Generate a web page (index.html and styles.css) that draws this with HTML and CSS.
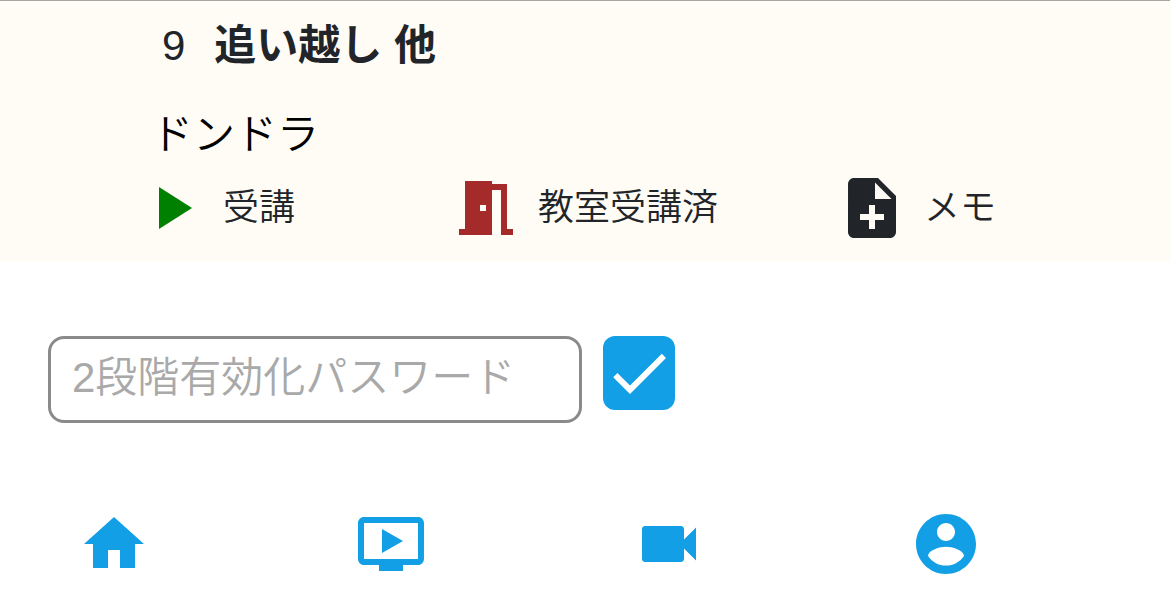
FILE: index.html
```html
<!DOCTYPE html>
<html lang="ja">
<head>
    <meta charset="UTF-8">
    <meta name="viewport" content="width=device-width, initial-scale=1.0">
    <title>追い越し 他</title>
    <link rel="stylesheet" href="styles.css">
</head>
<body>
    <main>
        <section class="lesson">
            <h2><span class="lesson-number">9</span>追い越し 他</h2>
            <p class="teacher">ドンドラ</p>
            <div class="actions">
                <button type="button" class="action">
                    <svg class="icon play" viewBox="0 0 24 24"><path d="M8 5v14l11-7z"/></svg>
                    <span>受講</span>
                </button>
                <button type="button" class="action">
                    <svg class="icon room" viewBox="0 0 24 24"><path d="M14 6v15H3v-2h2V3h9v1h5v15h2v2h-4V6h-3zm-4 5v2h2v-2h-2z"/></svg>
                    <span>教室受講済</span>
                </button>
                <button type="button" class="action">
                    <svg class="icon" viewBox="0 0 24 24"><path d="M14 2H6c-1.1 0-1.99.9-1.99 2L4 20c0 1.1.89 2 1.99 2H18c1.1 0 2-.9 2-2V8l-6-6zm2 14h-3v3h-2v-3H8v-2h3v-3h2v3h3v2zm-3-7V3.5L18.5 9H13z"/></svg>
                    <span>メモ</span>
                </button>
            </div>
        </section>

        <form class="password-form">
            <input type="text" class="password" placeholder="2段階有効化パスワード" aria-label="2段階有効化パスワード">
            <button type="button" class="submit" aria-label="送信">
                <svg class="icon" viewBox="0 0 24 24"><path d="M9 16.2L4.8 12l-1.4 1.4L9 19 21 7l-1.4-1.4L9 16.2z"/></svg>
            </button>
        </form>
    </main>

    <nav class="bottom-nav">
        <a href="#" aria-label="ホーム">
            <svg class="icon" viewBox="0 0 24 24"><path d="M10 20v-6h4v6h5v-8h3L12 3 2 12h3v8z"/></svg>
        </a>
        <a href="#" aria-label="動画">
            <svg class="icon" viewBox="0 0 24 24"><path d="M21 3H3c-1.11 0-2 .89-2 2v12c0 1.1.89 2 2 2h5v2h8v-2h5c1.1 0 1.99-.9 1.99-2L23 5c0-1.11-.9-2-2-2zm0 14H3V5h18v12zm-5-6l-7 4V7z"/></svg>
        </a>
        <a href="#" aria-label="カメラ">
            <svg class="icon" viewBox="0 0 24 24"><path d="M17 10.5V7c0-.55-.45-1-1-1H4c-.55 0-1 .45-1 1v10c0 .55.45 1 1 1h12c.55 0 1-.45 1-1v-3.5l4 4v-11l-4 4z"/></svg>
        </a>
        <a href="#" aria-label="アカウント">
            <svg class="icon" viewBox="0 0 24 24"><path d="M12 2C6.48 2 2 6.48 2 12s4.48 10 10 10 10-4.48 10-10S17.52 2 12 2zm0 3c1.66 0 3 1.34 3 3s-1.34 3-3 3-3-1.34-3-3 1.34-3 3-3zm0 14.2c-2.5 0-4.71-1.28-6-3.22.03-1.99 4-3.08 6-3.08 1.99 0 5.97 1.09 6 3.08-1.29 1.94-3.5 3.22-6 3.22z"/></svg>
        </a>
    </nav>
</body>
</html>
```
FILE: styles.css
```css
* {
    box-sizing: border-box;
}
body {
    margin: 0;
    background: #fff;
    color: #212529;
    font-family: "Liberation Sans", "Noto Sans CJK JP", sans-serif;
    font-weight: 350;
}
button,
input {
    font: inherit;
    color: inherit;
}
.icon {
    display: block;
    flex: none;
    width: 72px;
    height: 72px;
    fill: currentColor;
}

.lesson {
    padding: 15px 0 18px;
    border-top: 1px solid #aaa7a2;
    background: #fffcf5;
}
.lesson h2 {
    display: flex;
    align-items: center;
    gap: 29px;
    margin: 0;
    padding-left: 162px;
    font-size: 42px;
    line-height: 60px;
    font-weight: 700;
}
.lesson-number {
    font-weight: 400;
}
.teacher {
    margin: 29px 0 7px;
    padding-left: 151px;
    color: #000;
    font-size: 42px;
    line-height: 60px;
}
.actions {
    display: grid;
    grid-template-columns: 315fr 386fr 334fr;
    padding-left: 135px;
}
.action {
    display: flex;
    align-items: center;
    gap: 16px;
    padding: 0;
    border: none;
    background: none;
    font-size: 36px;
    line-height: 48px;
    cursor: pointer;
}
.play {
    color: green;
}
.room {
    color: brown;
}

.password-form {
    display: flex;
    align-items: flex-start;
    gap: 21px;
    padding: 74px 48px 0;
}
.password {
    width: 534px;
    height: 87px;
    padding: 0 21px 4px;
    border: 3px solid #8a8a8c;
    border-radius: 16px;
    background: #fff;
    font-size: 42px;
}
.password::placeholder {
    color: #a9a9a9;
    opacity: 1;
}
.submit {
    padding: 1px 0;
    border: none;
    border-radius: 12px;
    background: #139fe5;
    color: #fff;
    cursor: pointer;
}

.bottom-nav {
    display: flex;
    justify-content: space-between;
    padding: 85px 188px 16px 78px;
}
.bottom-nav a {
    color: #139fe5;
}
```
